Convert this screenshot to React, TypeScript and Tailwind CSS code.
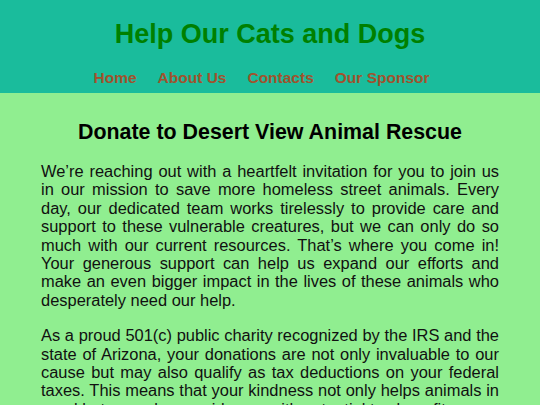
export default function App() {
  const navItems = ['Home', 'About Us', 'Contacts', 'Our Sponsor'];
  return (
    <div className="min-h-screen bg-[#90ee90] font-['Liberation_Sans',Arial,sans-serif]">
      <header className="bg-[#1abc9c] h-[93px] pt-[19px]">
        <h1 className="text-center text-[27px] font-bold text-[#008000] leading-[31px]">
          Help Our Cats and Dogs
        </h1>
        <nav className="mt-[16px] pr-[17px]">
          <ul className="flex justify-center gap-[21px]">
            {navItems.map((item) => (
              <li key={item}>
                <a href="#" className="text-[15.5px] font-bold text-[#a0522d]">
                  {item}
                </a>
              </li>
            ))}
          </ul>
        </nav>
      </header>
      <main className="px-[41px] pt-[27px]">
        <h2 className="text-center text-[21.4px] font-bold text-black leading-[25px]">
          Donate to Desert View Animal Rescue
        </h2>
        <p className="mt-[17px] text-[16.45px] leading-[18.4px] text-justify text-[#111]">
          We’re reaching out with a heartfelt invitation for you to join us in our mission to save more homeless street animals. Every day, our dedicated team works tirelessly to provide care and support to these vulnerable creatures, but we can only do so much with our current resources. That’s where you come in! Your generous support can help us expand our efforts and make an even bigger impact in the lives of these animals who desperately need our help.
        </p>
        <p className="mt-[17px] text-[16.45px] leading-[18.4px] text-justify text-[#111]">
          As a proud 501(c) public charity recognized by the IRS and the state of Arizona, your donations are not only invaluable to our cause but may also qualify as tax deductions on your federal taxes. This means that your kindness not only helps animals in need but may also provide you with potential tax benefits.
        </p>
      </main>
    </div>
  );
}
